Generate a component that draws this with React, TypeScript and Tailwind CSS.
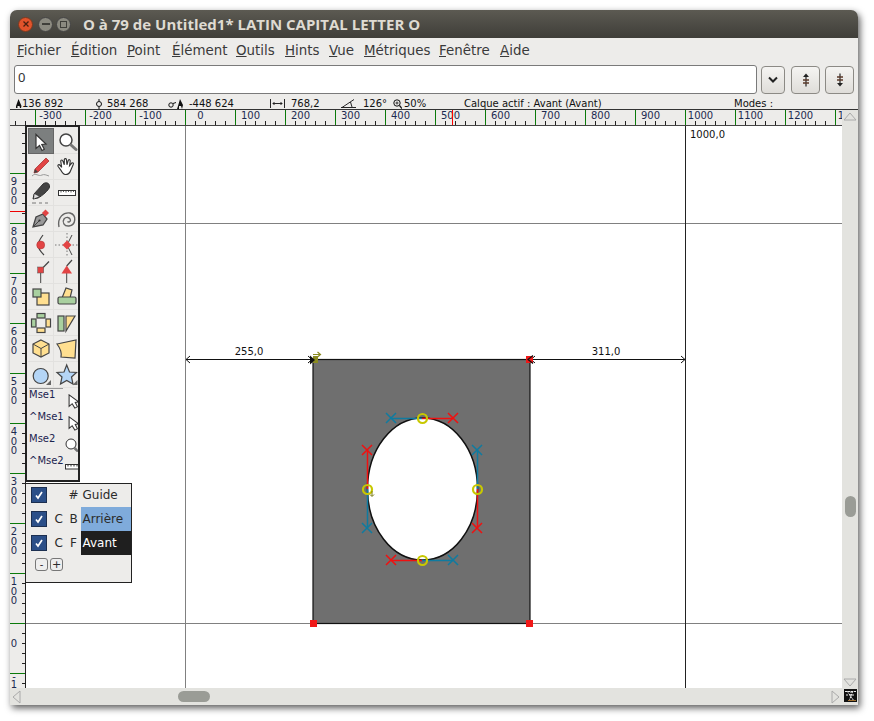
import React from 'react';

const range = (a: number, b: number, s = 1) => {
  const r: number[] = [];
  for (let i = a; i <= b; i += s) r.push(i);
  return r;
};

const S = '#444';
const Y = '#ffdf90';
const G = '#a9d09f';
const B = '#b4d5f6';
const R = '#e24444';

const toolIcons: React.ReactNode[] = [
  <path d="M8 6.5 L8 20.5 L11.5 17.5 L14 22.5 L16.3 21.3 L13.8 16.5 L18 16 Z" fill="#fff" stroke="#333" strokeWidth="1.2" />,
  <g><circle cx="12" cy="12" r="6" fill="#fff" stroke="#444" strokeWidth="1.5" /><path d="M17 17 L22 21.5" stroke="#777" strokeWidth="3" strokeLinecap="round" /></g>,
  <g><path d="M7 15 L18 4 L21 7 L10 18 L6 19 Z" fill={R} stroke="#a33" strokeWidth="0.8" /><path d="M6 19 L7 15 L10 18 Z" fill="#444" /><path d="M4 22 C8 18 10 23 14 21 C16 20 18 21 21 22" fill="none" stroke="#999" strokeWidth="1" /></g>,
  <path transform="translate(1.5 2) scale(0.88)" d="M6 16 L3 12 C2 10 4 9 5.5 11 L7 13 L6 6 C6 4 8 4 8.5 6 L10 10 L10 4 C10.5 2.5 12.5 2.5 12.5 4.5 L13 10 L14.5 5 C15 3.5 17 4 16.7 6 L16 11 L18.5 8 C20 7 21 8.5 20 10 L17 17 C16 20 14 21 11 21 C9 21 7.5 19 6 16 Z" fill="#fff" stroke="#333" strokeWidth="1.3" />,
  <g><path d="M6 14 L15 4 C18 1.5 22 3 21.5 7 C21 10 14 16 10 18 L5 19 Z" fill="#444" stroke="#333" /><path d="M6.5 14 L11 16.5 L6 18.5 Z" fill="#ddd" /><path d="M4 23 H8 M11 23 H14 M17 23 H20" stroke="#777" strokeWidth="1" /></g>,
  <g><rect x="4.5" y="10.5" width="17" height="5" fill="#fff" stroke="#333" /><path d="M7 10.5 V12.5 M9.5 10.5 V12 M12 10.5 V12.5 M14.5 10.5 V12 M17 10.5 V12.5 M19.5 10.5 V12" stroke="#333" strokeWidth="0.8" /></g>,
  <g><path d="M5 21 L8 11 L15 8 L19 13 L15 19 Z" fill="#999" stroke="#444" strokeWidth="1.3" /><path d="M5 21 L11 15" stroke="#444" /><circle cx="11.5" cy="14.5" r="1.1" fill="#333" /><rect x="15" y="4.5" width="5" height="5" fill={R} transform="rotate(45 17.5 7)" /></g>,
  <path d="M5 21 C3 11 10 6 16 7 C23 9 22 19 15 20 C10 20.5 8 16 10 13 C12 10.5 16 11 16.5 14 C16.5 16 14.5 16.5 13.5 15.5" fill="none" stroke="#666" strokeWidth="1.4" />,
  <g><path d="M15 3 C12 7 10 10 10 13 C10 17 13 20 16 23" fill="none" stroke="#444" strokeWidth="1.2" /><circle cx="12.7" cy="13" r="4" fill={R} stroke="#a33" strokeWidth="0.5" /></g>,
  <g><path d="M1 13 H25" stroke="#777" strokeWidth="1" strokeDasharray="1.5 2" /><path d="M13 1 V25" stroke="#777" strokeWidth="1" strokeDasharray="1.5 2" /><path d="M18 3 L13 13 L18 23" fill="none" stroke="#444" /><path d="M13 8.5 L17.5 13 L13 17.5 L8.5 13 Z" fill={R} /></g>,
  <g><path d="M12.7 12 L21 3.5" stroke="#444" strokeWidth="1.2" /><path d="M12.7 15 V25" stroke="#444" /><rect x="9.7" y="9" width="6" height="6" fill={R} stroke="#555" strokeWidth="0.5" /></g>,
  <g><path d="M12.7 8 L18 2" stroke="#444" strokeWidth="1.2" /><path d="M12.7 15 V25" stroke="#444" /><path d="M12.7 7.5 L18 15.5 H7.5 Z" fill={R} /></g>,
  <g><rect x="9" y="9" width="12" height="12" fill={Y} stroke={S} strokeWidth="1.2" /><rect x="5" y="5" width="8" height="8" fill={G} stroke={S} strokeWidth="1.2" /></g>,
  <g><path d="M8 14 L12 4 L18 6 L16 14 Z" fill={Y} stroke={S} strokeWidth="1.2" /><rect x="4" y="13" width="18" height="7" fill={G} stroke={S} strokeWidth="1.2" rx="1.5" /></g>,
  <g><rect x="9" y="3.5" width="8" height="4.5" fill={G} stroke={S} strokeWidth="1.2" /><rect x="3.5" y="9" width="4.5" height="8" fill={G} stroke={S} strokeWidth="1.2" /><rect x="18" y="9" width="4.5" height="8" fill={Y} stroke={S} strokeWidth="1.2" /><rect x="9" y="18" width="8" height="4.5" fill={Y} stroke={S} strokeWidth="1.2" /></g>,
  <g><rect x="4" y="6" width="6" height="15" fill={G} stroke={S} strokeWidth="1.2" /><path d="M12 6 H21 L12 21 Z" fill={Y} stroke={S} strokeWidth="1.2" /></g>,
  <g><path d="M13 4 L21 8 V17 L13 21 L5 17 V8 Z" fill={Y} stroke={S} strokeWidth="1.2" /><path d="M5 8 L13 12.5 L21 8 M13 12.5 V21" fill="none" stroke={S} strokeWidth="1" /></g>,
  <path d="M3 8 L22 4 L21 22 L7 21 C8 16 6 12 3 8 Z" fill={Y} stroke={S} strokeWidth="1.2" />,
  <g><circle cx="12.7" cy="14" r="7.5" fill={B} stroke={S} strokeWidth="1.2" /><path d="M23 18 V23 H18 Z" fill="#666" /></g>,
  <g><path d="M12.7 3 L15.5 10 L22.5 10.5 L17.5 15 L19 22 L12.7 18.5 L6.5 22 L8 15 L3 10.5 L10 10 Z" fill={B} stroke={S} strokeWidth="1.2" /><path d="M23.5 18 V23 H18.5 Z" fill="#666" /></g>,
];

const menus: [string, string, string][] = [
  ['F', 'ichier', 'w-[54px]'],
  ['É', 'dition', 'w-[56px]'],
  ['P', 'oint', 'w-[45px]'],
  ['É', 'lément', 'w-[64px]'],
  ['O', 'utils', 'w-[49px]'],
  ['H', 'ints', 'w-[44px]'],
  ['V', 'ue', 'w-[35px]'],
  ['M', 'étriques', 'w-[75px]'],
  ['F', 'enêtre', 'w-[61px]'],
  ['A', 'ide', 'w-[40px]'],
];

const Xm = ({ x, y, c }: { x: number; y: number; c: string }) => (
  <path d={`M${x - 5} ${y - 5} L${x + 5} ${y + 5} M${x + 5} ${y - 5} L${x - 5} ${y + 5}`} stroke={c} strokeWidth="1.5" fill="none" />
);

const RED = '#f01010';
const BLU = '#0f7ba0';

const TopRuler = () => (
  <svg width="832" height="16" viewBox="10 110 832 16" className="block shrink-0 bg-[#edecea]">
    {range(15, 835, 10).map((x) => (
      <path key={x} d={`M${x + 0.5} 121 V125`} stroke="#222" />
    ))}
    {range(-3, 13).map((k) => (
      <g key={k}>
        <path d={`M${185.5 + k * 50} 110 V125`} stroke="#0a7a0a" />
        <text x={200.5 + k * 50} y="119" textAnchor="middle" fontSize="10" fill="#1c2a50" fontFamily="DejaVu Sans">{k * 100}</text>
      </g>
    ))}
    <path d="M452.5 110 V125" stroke="#f00" />
    <path d="M10 125.5 H842" stroke="#444" />
  </svg>
);

const leftLabels: [number, string][] = [
  [173, '9'], [223, '8'], [273, '7'], [323, '6'], [373, '5'], [423, '4'], [473, '3'], [523, '2'], [573, '1'],
];

const LeftRuler = () => (
  <svg width="16" height="562" viewBox="10 126 16 562" className="block shrink-0 bg-[#edecea]">
    {range(133, 683, 10).map((y) => (
      <path key={y} d={`M22 ${y + 0.5} H25`} stroke="#222" />
    ))}
    {[173, 223, 273, 323, 373, 423, 473, 523, 573, 623, 673].map((y) => (
      <path key={y} d={`M10 ${y + 0.5} H25`} stroke="#0a7a0a" />
    ))}
    <path d="M10 211.5 H25" stroke="#e00" />
    {leftLabels.map(([y, d]) => (
      <text key={y} fontSize="10" fill="#1c2a50" fontFamily="DejaVu Sans" textAnchor="middle">
        <tspan x="14" y={y + 12}>{d}</tspan>
        <tspan x="14" y={y + 21.5}>0</tspan>
        <tspan x="14" y={y + 30.5}>0</tspan>
      </text>
    ))}
    <text x="14" y="647" fontSize="10" fill="#1c2a50" fontFamily="DejaVu Sans" textAnchor="middle">0</text>
    <text fontSize="10" fill="#1c2a50" fontFamily="DejaVu Sans" textAnchor="middle">
      <tspan x="14" y="680">-</tspan>
      <tspan x="14" y="687.5">1</tspan>
    </text>
    <path d="M25.5 126 V688" stroke="#222" />
  </svg>
);

const Glyph = () => (
  <svg width="816" height="562" viewBox="26 126 816 562" className="block bg-white">
    <path d="M0 223.5 H842 M0 623.5 H842" stroke="#808080" />
    <path d="M185.5 126 V688" stroke="#808080" />
    <path d="M685.5 126 V688" stroke="#222" />
    <text x="690" y="138" fontSize="10" fill="#111" fontFamily="DejaVu Sans">1000,0</text>

    <path d="M186 359.5 H312 M531 359.5 H685" stroke="#111" />
    <path d="M190 356 L186 359.5 L190 363 M308 356 L312 359.5 L308 363 M535 356 L531 359.5 L535 363 M681 356 L685 359.5 L681 363" stroke="#111" fill="none" />
    <text x="249" y="355" textAnchor="middle" fontSize="10" fill="#111" fontFamily="DejaVu Sans">255,0</text>
    <text x="606" y="355" textAnchor="middle" fontSize="10" fill="#111" fontFamily="DejaVu Sans">311,0</text>

    <rect x="313" y="359.5" width="217" height="264" fill="#6f6f6f" stroke="#111" strokeWidth="1.2" />
    <ellipse cx="422.5" cy="489" rx="55" ry="71" fill="#fff" stroke="#111" strokeWidth="1.5" />

    <path d="M391 418.5 H422" stroke={BLU} strokeWidth="1.5" />
    <path d="M422 418.5 H453" stroke={RED} strokeWidth="1.5" />
    <path d="M367.5 450 V489" stroke={RED} strokeWidth="1.5" />
    <path d="M367.5 489 V528" stroke={BLU} strokeWidth="1.5" />
    <path d="M477.5 450 V489" stroke={BLU} strokeWidth="1.5" />
    <path d="M477.5 489 V528" stroke={RED} strokeWidth="1.5" />
    <path d="M391 560.5 H422" stroke={RED} strokeWidth="1.5" />
    <path d="M422 560.5 H453" stroke={BLU} strokeWidth="1.5" />
    <Xm x={391} y={418} c={BLU} />
    <Xm x={453} y={418} c={RED} />
    <Xm x={367} y={450} c={RED} />
    <Xm x={367} y={528} c={BLU} />
    <Xm x={477} y={450} c={BLU} />
    <Xm x={477} y={528} c={RED} />
    <Xm x={391} y={560} c={RED} />
    <Xm x={453} y={560} c={BLU} />
    {[[422.5, 418.5], [422.5, 560.5], [367.5, 489.5], [477.5, 489.5]].map(([x, y]) => (
      <circle key={x * y} cx={x} cy={y} r="4.5" fill="none" stroke="#c8c800" strokeWidth="2.2" />
    ))}
    <path d="M372 491 V496 M370 494.5 L372 496.5 L374 494.5" stroke="#7a7a10" strokeWidth="1" fill="none" />

    <rect x="310" y="620" width="7" height="7" fill="#f01818" />
    <rect x="526" y="620" width="7" height="7" fill="#f01818" />
    <rect x="526" y="356" width="7" height="7" fill="#f01818" />
    <path d="M533 355.5 L528 359.5 L533 363.5" stroke="#111" strokeWidth="1.2" fill="none" />
    <rect x="313" y="356" width="5" height="7" fill="#8a8a20" />
    <path d="M310 355.5 L315 360 L310 364.5 Z" fill="#111" />
    <path d="M313 354.5 H320 M317.5 352 L320.5 354.5 L317.5 357" stroke="#8a8a20" strokeWidth="1.2" fill="none" />
  </svg>
);

const rowCls = 'flex h-[22px] justify-between';
const Cur = () => (
  <svg width="11" height="15" viewBox="0 0 12 17" className="mt-[10px] shrink-0 -mr-[1px]">
    <path d="M1 1 V14 L4.5 11 L7.5 16 L10.5 14.5 L8 9.5 L12 9 Z" fill="#fff" stroke="#333" strokeWidth="1.2" />
  </svg>
);

const Palette = () => (
  <div className="absolute left-[-1px] top-[-1px] z-10 flex h-[357px] w-[55px] flex-col overflow-hidden border-2 border-[#222] bg-[#edecea] pt-[1px] pl-[1px]">
    <div className="grid shrink-0 grid-cols-[26px_26px] grid-rows-[repeat(10,26px)]">
      {toolIcons.map((ic, i) => (
        <div key={i} className={i === 0 ? 'flex items-center justify-center border border-[#666] bg-[#7c7f7f]' : 'flex items-center justify-center border-r border-b border-[#e2e1df]'}>
          <svg width="26" height="26" viewBox="0 0 26 26" className="shrink-0">{ic}</svg>
        </div>
      ))}
    </div>
    <div className="ml-px mr-[15px] h-px shrink-0 bg-[#999]" />
    <div className="relative -mt-[5px] flex flex-col pl-[1px] text-[10px] leading-[22px] text-[#1c2450]">
      <div className={rowCls}><span>Mse1</span><Cur /></div>
      <div className={rowCls}><span>^Mse1</span><Cur /></div>
      <div className={rowCls}><span>Mse2</span><svg width="13" height="14" viewBox="0 0 13 14" className="mt-[10px] shrink-0"><circle cx="6" cy="6" r="5" fill="#fff" stroke="#333" /><path d="M9.5 10 L13 13.5" stroke="#777" strokeWidth="2.5" /></svg></div>
      <div className={rowCls}><span>^Mse2</span><svg width="13" height="7" viewBox="0 0 13 7" className="mt-[13px] shrink-0"><rect x="0.5" y="1.5" width="14" height="4.5" fill="#fff" stroke="#333" /><path d="M3 1.5 V3.5 M6 1.5 V3.5 M9 1.5 V3.5 M12 1.5 V3.5" stroke="#333" /></svg></div>
    </div>
  </div>
);

const Check = () => (
  <span className="flex h-[14px] w-[14px] items-center justify-center bg-[#2b4f88] outline outline-1 outline-[#1c2f50]">
    <svg width="10" height="10" viewBox="0 0 10 10"><path d="M2 5.5 L4 8 L8 2" fill="none" stroke="#fff" strokeWidth="1.7" /></svg>
  </span>
);

const layers: [string, string, string][] = [
  ['', '#', 'Guide'],
  ['C', 'B', 'Arrière'],
  ['C', 'F', 'Avant'],
];

const Layers = () => (
  <div className="absolute left-[-1px] top-[357px] z-10 flex h-[100px] w-[107px] flex-col border-[1.5px] border-[#222] bg-[#edecea] text-[12px] text-[#2b2b2b]">
    <div className="-mt-[1px] flex flex-col">
      {layers.map(([a, b, n], i) => (
        <div key={n} className="flex h-[24px] items-center">
          <div className="ml-[5.5px] w-[23px]"><Check /></div>
          <span className="w-[13px]">{a}</span>
          <span className="w-[12px] text-center">{b}</span>
          <span className={i === 1 ? 'ml-[1px] h-full flex-1 bg-[#7fabdb] pl-[2px] leading-[24px]' : i === 2 ? 'ml-[1px] h-full flex-1 bg-[#1f1f1f] pl-[2px] leading-[24px] text-white' : 'ml-[1px] h-full flex-1 pl-[2px] leading-[24px]'}>{n}</span>
        </div>
      ))}
    </div>
    <div className="mt-[3px] ml-[9px] flex gap-[2px]">
      <span className="flex h-[13px] w-[13px] items-center justify-center rounded-[3px] border border-[#777] bg-[#eee] text-[10px] leading-none">-</span>
      <span className="flex h-[13px] w-[13px] items-center justify-center rounded-[3px] border border-[#777] bg-[#eee] text-[11px] leading-none">+</span>
    </div>
  </div>
);

const BtnIcon = ({ up }: { up: boolean }) => (
  <svg width="10" height="14" viewBox="0 0 10 14">
    <g transform={up ? undefined : 'rotate(180 5 7)'}>
      <path d="M5 0.5 L8 4 H2 Z" fill="#222" />
      <path d="M5 3 V13.5" stroke="#222" strokeWidth="1.2" />
      <path d="M2 7 H8 M2 10 H8" stroke="#5c3a2a" strokeWidth="1.6" />
    </g>
  </svg>
);

const btn = 'flex h-[28px] items-center justify-center rounded-[4px] border border-[#8c8a85] bg-gradient-to-b from-[#f5f4f2] to-[#dfddd9]';

export default function App() {
  return (
    <div className="h-[721px] w-[874px] overflow-hidden bg-white pl-[10px] pt-[10px] font-['DejaVu_Sans',sans-serif]">
      <div className="flex h-[695px] w-[848px] flex-col overflow-hidden rounded-t-[7px] bg-[#edecea] shadow-[2px_3px_7px_rgba(0,0,0,0.65)]">
        <div className="flex h-[28px] shrink-0 items-center bg-gradient-to-b from-[#5c5a52] to-[#3f3e39] pl-[8px]">
          <span className="flex h-[15px] w-[15px] items-center justify-center rounded-full border border-[#7a3a20] bg-[#e2532b]">
            <svg width="8" height="8" viewBox="0 0 8 8"><path d="M1.5 1.5 L6.5 6.5 M6.5 1.5 L1.5 6.5" stroke="#4a2010" strokeWidth="1.3" /></svg>
          </span>
          <span className="ml-[5px] flex h-[15px] w-[15px] items-center justify-center rounded-full border border-[#444] bg-[#8b8a80]">
            <span className="h-[2px] w-[8px] bg-[#3f3f3a]" />
          </span>
          <span className="ml-[3px] flex h-[15px] w-[15px] items-center justify-center rounded-full border border-[#444] bg-[#8b8a80]">
            <span className="h-[7px] w-[7px] border border-[#3f3f3a]" />
          </span>
          <span className="ml-[12px] font-['Open_Sans',sans-serif] text-[15px] font-bold whitespace-nowrap text-[#dfdbd2]">O à 79 de Untitled1* LATIN CAPITAL LETTER O</span>
        </div>

        <div className="flex h-[25px] shrink-0 items-center pl-[7px] pt-[1px] text-[13.4px] text-[#3a3a3a]">
          {menus.map(([a, b, w]) => (
            <span key={a + b} className={w}><span className="underline">{a}</span>{b}</span>
          ))}
        </div>

        <div className="mt-[2px] flex h-[29px] shrink-0 items-center pl-[4px]">
          <div className="flex h-[29px] w-[743px] items-center rounded-[3px] border-[1.5px] border-[#7a7a7a] bg-white pb-[4px] pl-[3px] font-['Noto_Sans',sans-serif] text-[13px] text-[#333]">0</div>
          <div className={`${btn} ml-[4px] w-[24px]`}>
            <svg width="10" height="7" viewBox="0 0 10 7"><path d="M1 1.5 L5 5.5 L9 1.5" fill="none" stroke="#222" strokeWidth="2" /></svg>
          </div>
          <div className={`${btn} ml-[6px] w-[29px]`}><BtnIcon up /></div>
          <div className={`${btn} ml-[5px] w-[29px]`}><BtnIcon up={false} /></div>
        </div>

        <div className="mt-[2px] flex h-[14px] shrink-0 items-center border-b border-[#333] pt-[2px] text-[10px] leading-none whitespace-nowrap text-[#111]">
          <span className="ml-[5px] flex w-[80px] items-center">
            <svg width="7" height="10" viewBox="0 0 7 10"><path d="M1 9 L1 7 L3.5 0 L6.5 7 L6 9 L5 9 L4.5 7 L2.5 7 L2.5 9 Z" fill="#111" /></svg>136 892
          </span>
          <span className="flex w-[73px] items-center">
            <svg width="8" height="10" viewBox="0 0 8 10" className="mr-[3px]"><path d="M4 0 V2 M4 8 V10" stroke="#111" /><circle cx="4" cy="5" r="2.5" fill="none" stroke="#111" /></svg>
            <span className="ml-[1px]">584 268</span>
          </span>
          <span className="flex w-[102px] items-center">
            <svg width="15" height="10" viewBox="0 0 15 10" className="mr-[6px]"><circle cx="3" cy="6" r="2.2" fill="none" stroke="#111" /><path d="M5 4.5 L8 3.5" stroke="#111" /><path d="M9 10 L10 7 L12 0 L15 6 L14 10 L13 7 L11 7 L11 10 Z" fill="#111" /></svg>
            -448 624
          </span>
          <span className="flex w-[71px] items-center">
            <svg width="15" height="9" viewBox="0 0 15 9" className="mr-[6px]"><path d="M0.5 0 V9 M14.5 0 V9 M3 4.5 H12 M4.5 3 L3 4.5 L4.5 6 M10.5 3 L12 4.5 L10.5 6" stroke="#111" fill="none" strokeWidth="0.9" /></svg>
            768,2
          </span>
          <span className="flex w-[52px] items-center">
            <svg width="15" height="9" viewBox="0 0 15 9" className="mr-[7px]"><path d="M0 8.5 H15 M1 8.5 L13 0.5 M9.5 3 L11 8" stroke="#111" fill="none" strokeWidth="0.9" /></svg>
            126°
          </span>
          <span className="flex w-[71px] items-center">
            <svg width="9" height="10" viewBox="0 0 9 10" className="mr-[2px]"><circle cx="4" cy="4" r="3.2" fill="none" stroke="#111" /><path d="M6.5 6.5 L9 9.5" stroke="#111" strokeWidth="1.2" /><path d="M2.5 4 H5.5 M4 2.5 V5.5" stroke="#111" strokeWidth="0.8" /></svg>
            50%
          </span>
          <span className="w-[270px]">Calque actif : Avant (Avant)</span>
          <span>Modes :</span>
        </div>

        <div className="flex min-h-0 flex-1">
          <div className="flex w-[832px] flex-col">
            <TopRuler />
            <div className="relative flex h-[562px]">
              <LeftRuler />
              <div className="relative">
                <Glyph />
                <Palette />
                <Layers />
              </div>
            </div>
            <div className="flex h-[17px] items-center justify-between bg-[#e3e3df] pl-[2px] pr-[2px]">
              <svg width="9" height="14" viewBox="0 0 9 14"><path d="M8 1 L1 7 L8 13 Z" fill="none" stroke="#aaa" /></svg>
              <span className="absolute ml-[166px] h-[11px] w-[32px] rounded-full bg-[#9a9c96]" />
              <svg width="9" height="14" viewBox="0 0 9 14"><path d="M1 1 L8 7 L1 13 Z" fill="none" stroke="#aaa" /></svg>
            </div>
          </div>
          <div className="flex w-[16px] flex-col items-center bg-[#e3e3df]">
            <svg width="14" height="9" viewBox="0 0 14 9" className="mt-[2px] shrink-0"><path d="M1 8 L7 1 L13 8 Z" fill="none" stroke="#aaa" /></svg>
            <div className="mt-[375px] h-[21px] w-[11px] shrink-0 rounded-full bg-[#9a9c96]" />
            <svg width="14" height="9" viewBox="0 0 14 9" className="mt-[161px] shrink-0"><path d="M1 1 L7 8 L13 1 Z" fill="none" stroke="#aaa" /></svg>
            <svg width="13" height="13" viewBox="0 0 13 13" className="mt-[2px] shrink-0 bg-[#111]"><path d="M1 2.5 H12 M3 2 L10 12 M9 2 L5 12 M2 6 H10 M7 2 V9" stroke="#eee" strokeWidth="1" strokeDasharray="2 1" /><path d="M4 11.5 H12" stroke="#a07030" strokeWidth="1" /></svg>
          </div>
        </div>
      </div>
    </div>
  );
}
